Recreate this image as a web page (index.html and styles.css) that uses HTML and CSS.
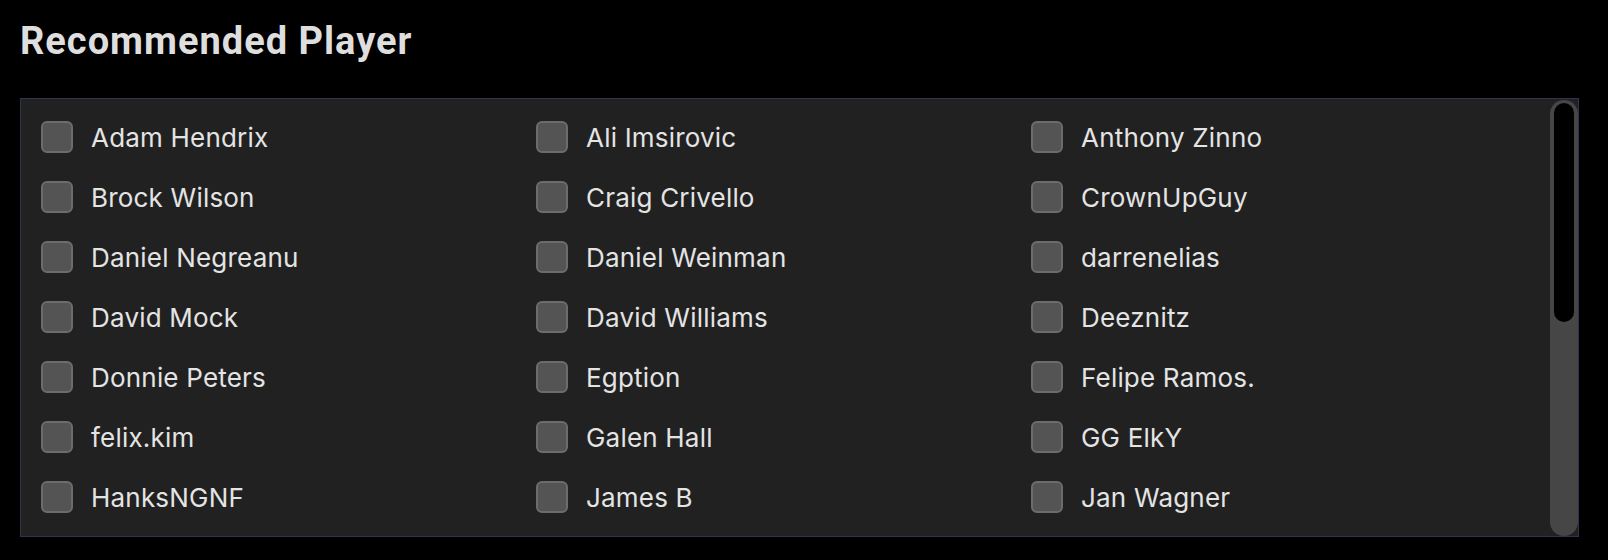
FILE: index.html
```html
<!DOCTYPE html>
<html lang="en">
<head>
  <meta charset="UTF-8" />
  <meta name="viewport" content="width=device-width, initial-scale=1.0"/>
  <title>Recommended Player</title>
  <link rel="stylesheet" href="styles.css">
</head>
<body>
  <div class="container">
    <h1>Recommended Player</h1>
    <div class="panel">
      <div class="player-list" id="playerList"></div>
      <div class="scrollbar"><div class="thumb"></div></div>
    </div>
  </div>

  <script>
    const players = [
      "Adam Hendrix", "Ali Imsirovic", "Anthony Zinno",
      "Brock Wilson", "Craig Crivello", "CrownUpGuy",
      "Daniel Negreanu", "Daniel Weinman", "darrenelias",
      "David Mock", "David Williams", "Deeznitz",
      "Donnie Peters", "Egption", "Felipe Ramos.",
      "felix.kim", "Galen Hall", "GG ElkY",
      "HanksNGNF", "James B", "Jan Wagner"
    ];

    const list = document.getElementById("playerList");
    players.forEach(name => {
      const label = document.createElement("label");
      label.className = "player";
      const box = document.createElement("input");
      box.type = "checkbox";
      box.name = "player";
      box.value = name;
      const span = document.createElement("span");
      span.innerText = name;
      label.appendChild(box);
      label.appendChild(span);
      list.appendChild(label);
    });
  </script>
</body>
</html>
```

FILE: styles.css
```css
:root {
  --bg: #000;
  --panel: #212121;
  --panel-border: #2f3550;
  --text: #e4e4e4;
  --title: #dedede;
  --check: #545454;
  --check-border: #6c6c6c;
  --track: #464646;
}

body {
  margin: 0;
  padding: 0;
  background-color: var(--bg);
  color: var(--text);
  font-family: Inter, "Noto Sans", sans-serif;
}

.container {
  padding: 18px 29px 0 20px;
}

h1 {
  margin: 0 0 34px;
  color: var(--title);
  font-family: Roboto, sans-serif;
  font-weight: 700;
  font-size: 38px;
  line-height: 46px;
  letter-spacing: 1px;
}

.panel {
  height: 439px;
  box-sizing: border-box;
  background: var(--panel);
  border: 1px solid var(--panel-border);
  display: flex;
  overflow: hidden;
}

.player-list {
  flex: 1;
  padding: 22px 24px 22px 20px;
  display: grid;
  grid-template-columns: repeat(3, 1fr);
  row-gap: 28px;
  align-content: start;
}

/* fake scrollbar, the list is taller than the panel */
.scrollbar {
  width: 28px;
  box-sizing: border-box;
  margin-top: 1px;
  padding: 3px 4px;
  background: var(--track);
  border-radius: 14px;
}

.thumb {
  height: 219px;
  background: #000;
  border-radius: 10px;
}

.player {
  display: flex;
  align-items: center;
  gap: 18px;
  height: 32px;
  font-size: 26px;
  letter-spacing: 0.2px;
  cursor: pointer;
}

.player input {
  appearance: none;
  -webkit-appearance: none;
  margin: 0;
  width: 32px;
  height: 32px;
  box-sizing: border-box;
  border: 2px solid var(--check-border);
  border-radius: 6px;
  background: var(--check);
  flex-shrink: 0;
  cursor: pointer;
}

.player input:checked {
  background: #4a90e2;
  border-color: #4a90e2;
}
```
